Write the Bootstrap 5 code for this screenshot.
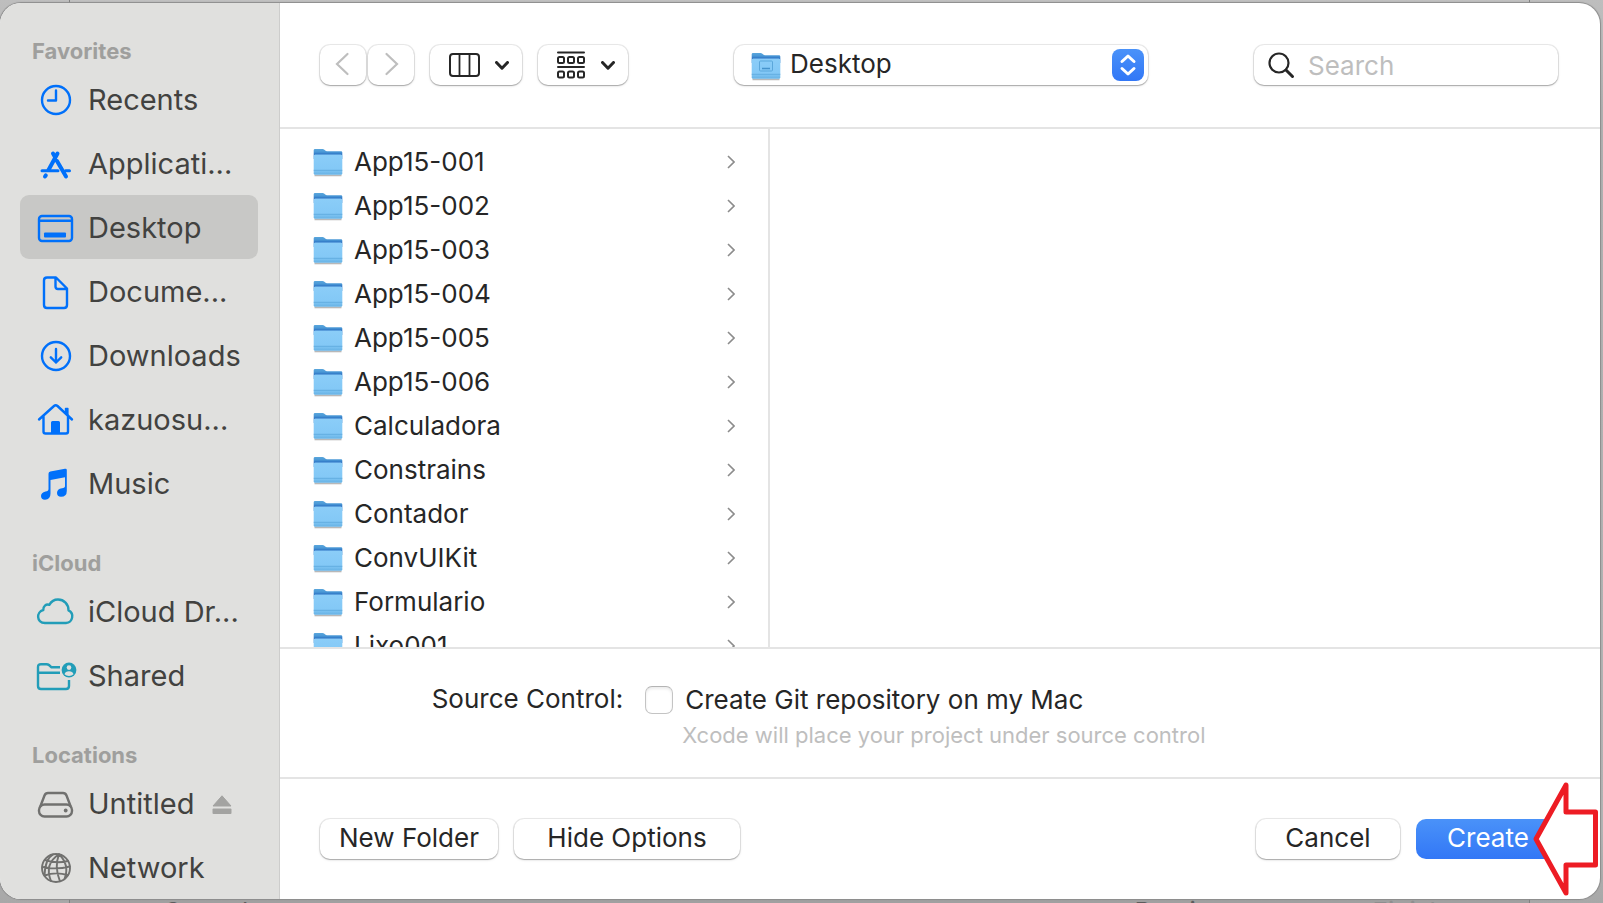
<!DOCTYPE html>
<html lang="en">
<head>
<meta charset="utf-8">
<meta name="viewport" content="width=device-width, initial-scale=1">
<title>Save project</title>
<link rel="stylesheet" href="https://cdn.jsdelivr.net/npm/bootstrap@5.3.0/dist/css/bootstrap.min.css">
<style>
  :root { --ink: #262626; --rule: #e4e4e4; --faint: #bebebe; --blue: #0070fa; --teal: #229db8; }
  body {
    font-family: "Inter", "Liberation Sans", sans-serif;
    font-size: 26px; line-height: 32px; color: var(--ink);
    background: linear-gradient(#bebebe, #b0b0b0 12%, #b4b4b4 92%, #a8a8a8);
    padding: 3px 3px 4px 0;
  }
  svg { display: block; flex: none; overflow: visible; }

  /* the parent window, dimmed behind the sheet */
  .behind {
    inset: 0 73px 0 69px; z-index: -1;
    border: solid #808080; border-width: 0 1px;
    background: linear-gradient(#c0c0c0, #a0a0a0);
    padding: 0 84px 0 93px; gap: 132px; color: #5c5c5c;
  }
  .behind span { margin-bottom: -25px; }
  .behind .dim { color: #8e8e8e; }

  .sheet { border-radius: 21px; background: #fff; box-shadow: 0 0 1px 1px #8c8c8c; }

  /* sidebar */
  .side { width: 280px; background: #e0e0de; border-right: 1px solid #cdcdcc; padding: 0 21px 0 20px; }
  .side h2 { height: 64px; margin: 0; padding: 32px 0 0 12px; font-size: 22px; line-height: 32px; font-weight: 700; color: #9f9f9d; }
  .side .nav-link { height: 64px; padding: 0 0 0 16px; gap: 12px; border-radius: 9px; font-size: 29px; line-height: 40px; color: #424240; white-space: nowrap; }
  .side .nav-link span { padding-top: 2px; }
  .side .nav-link.active { background: #c8c8c6; }
  .side .nav-link > svg:first-child { color: var(--blue); }
  .side .teal .nav-link > svg:first-child { color: var(--teal); }
  .side .grey .nav-link > svg:first-child { color: #71716f; }
  .side .nav-link > .eject { color: #a3a3a1; margin-left: 6px; }
  .line { fill: none; stroke: currentColor; stroke-width: 2; stroke-linecap: round; stroke-linejoin: round; }
  .side .line { stroke-width: 2.4; }

  /* controls */
  .ctl {
    height: 40px; padding: 0; border: 0; border-radius: 10px; background: #fff; color: var(--ink);
    font-size: 26px; line-height: 36px;
    box-shadow: 0 0 0 1px rgba(0,0,0,.08), 0 1px 1px rgba(0,0,0,.2), 0 1px 3px rgba(0,0,0,.12);
  }
  .ctl:hover { background: #fafafa; color: var(--ink); }
  .btn.ctl { padding-bottom: 2px; }
  .tools { height: 126px; padding: 0 42px 0 40px; border-bottom: 2px solid var(--rule); }
  .nav-b { width: 46px; color: var(--faint); }
  .btn.view-b { width: 92px; padding: 0 13px 0 19px; }
  .btn.group-b { width: 90px; }
  .place { width: 414px; }
  .place select { padding: 0 50px 2px 56px; appearance: none; width: 100%; line-height: 38px; }
  .place .pic { left: 17px; top: 6px; pointer-events: none; }
  .place .knob { right: 4px; top: 4px; width: 32px; height: 32px; border-radius: 8px; background: linear-gradient(#4a92f9, #3277f6); pointer-events: none; }
  .find { width: 304px; }
  .find input { width: 100%; padding: 0 12px 0 54px; }
  .find input::placeholder { color: var(--faint); opacity: 1; }
  .find svg { left: 14px; top: 7px; pointer-events: none; }

  /* browser columns */
  .files { width: 490px; padding-top: 11px; border-right: 2px solid var(--rule); }
  .files .list-group-item { height: 44px; padding: 0 33px; gap: 11px; border: 0; color: var(--ink); background: none; }
  .files .list-group-item svg:last-child { color: #8c8c8c; }

  .options { padding: 35px 0 26px; border-top: 2px solid var(--rule); border-bottom: 2px solid var(--rule); }
  .opt-label { flex: 0 0 26%; text-align: right; line-height: 30px; }
  .opt-body { margin-left: 22px; }
  .tick { width: 28px; height: 28px; margin: 0; border: 1px solid #c4c4c4; border-top-color: #b4b4b4; box-shadow: inset 0 2px 3px rgba(0,0,0,.08); flex: none; }
  .tick.form-check-input[type=checkbox] { border-radius: 7px; }
  .note { padding-left: 37px; font-size: 22px; line-height: 32px; color: var(--faint); margin-top: 3px; }

  .foot { padding: 40px 40px 40px 40px; gap: 16px; }
  .go { background: linear-gradient(#4a92f9, #3277f6); color: #fff; box-shadow: none; }
  .go:hover { background: #3277f6; color: #fff; }
  .w-new { width: 178px; } .w-hide { width: 226px; } .w-act { width: 144px; }
  .pointer { right: 2px; bottom: 2px; pointer-events: none; }
</style>
</head>
<body class="vh-100 d-flex overflow-hidden position-relative">

<svg width="0" height="0" class="position-absolute" aria-hidden="true">
  <defs>
    <linearGradient id="fBack" x1="0" y1="0" x2="0" y2="1"><stop offset="0" stop-color="#5aa6dc"/><stop offset=".3" stop-color="#4a98d6"/><stop offset=".55" stop-color="#2a70c2"/><stop offset="1" stop-color="#3b8bd0"/></linearGradient>
    <linearGradient id="fFront" x1="0" y1="0" x2="0" y2="1"><stop offset="0" stop-color="#8bcdf8"/><stop offset=".75" stop-color="#83c8f6"/><stop offset="1" stop-color="#65b1e4"/></linearGradient>
    <symbol id="folder" viewBox="0 0 30 30">
      <path d="M1.500 28.500h27" stroke="#000" stroke-opacity=".28" stroke-width="1.600"/>
      <path d="M.7 3.200Q.7 2 2 2H9.500Q10.600 2 11.400 2.800L12.200 3.600Q13 4.300 14 4.300H28Q29.300 4.300 29.300 5.600V12H.7Z" fill="url(#fBack)"/>
      <path d="M.7 9Q.7 7.400 2.200 7.400H27.800Q29.300 7.400 29.300 9V26.200Q29.300 27.800 27.800 27.800H2.200Q.7 27.800 .7 26.200Z" fill="url(#fFront)"/>
      <path d="M.7 23.300H29.300" stroke="#5ba7db" stroke-width=".8"/>
    </symbol>
    <symbol id="chev" viewBox="0 0 8 14"><path d="M1 1 7 7 1 13" fill="none" stroke="currentColor" stroke-width="1.600"/></symbol>
    <symbol id="down" viewBox="0 0 14 9"><path d="M1.500 1.500 7 7.200 12.500 1.500" fill="none" stroke="currentColor" stroke-width="3" stroke-linecap="round" stroke-linejoin="round"/></symbol>
  </defs>
</svg>

<div class="behind position-absolute d-flex align-items-end overflow-hidden" aria-hidden="true">
  <span>Cancel</span>
  <span class="ms-auto">Previous</span>
  <span class="dim">Finish</span>
</div>

<main class="sheet d-flex flex-fill overflow-hidden position-relative">
  <nav class="side flex-shrink-0 overflow-hidden" aria-label="Places">
    <h2>Favorites</h2>
    <div class="nav flex-column flex-nowrap">
      <a class="nav-link d-flex align-items-center" href="#"><svg width="40" height="40"><g class="line"><circle cx="20" cy="21" r="14"/><path d="M20 11.500V21.500H12"/></g></svg><span>Recents</span></a>
      <a class="nav-link d-flex align-items-center" href="#"><svg width="40" height="40"><g class="line" style="stroke-width:4"><path d="M21.500 10.500 12.500 27M17 10.500 19 14M21 18 30 33.500M9.800 32.300 9 33.500"/><path d="M6 27.700H22M29.500 27.700H33.500" style="stroke-width:3"/></g></svg><span>Applicati...</span></a>
      <a class="nav-link active d-flex align-items-center" href="#" aria-current="page"><svg width="40" height="40"><rect class="line" x="3" y="9" width="33" height="25" rx="3"/><path class="line" d="M3.500 13.800H35.500"/><rect x="8" y="25.500" width="22" height="5" rx="1" fill="currentColor"/></svg><span>Desktop</span></a>
      <a class="nav-link d-flex align-items-center" href="#"><svg width="40" height="40"><path class="line" d="M11 6.500H20L31 17.500V34Q31 37 28 37H11Q8 37 8 34V9.500Q8 6.500 11 6.500ZM19.500 6.500V15.500Q19.500 18 22 18H31"/></svg><span>Docume...</span></a>
      <a class="nav-link d-flex align-items-center" href="#"><svg width="40" height="40"><g class="line"><circle cx="20" cy="21" r="14"/><path d="M20 14V27.500M14.800 22.300 20 27.500 25.200 22.300"/></g></svg><span>Downloads</span></a>
      <a class="nav-link d-flex align-items-center" href="#"><svg width="40" height="40"><path class="line" d="M3 20.500 18 7Q19.700 5.500 21.500 7L36 20.500M7.500 17V32.500Q7.500 34.500 9.500 34.500H30Q32 34.500 32 32.500V17"/><path fill="currentColor" d="M28.800 9.500Q28.800 8.700 29.600 8.700H31.800Q32.600 8.700 32.600 9.500V18L28.800 14.500ZM15 34.500V23.500Q15 22 16.500 22H22.500Q24 22 24 23.500V34.500Z"/></svg><span>kazuosu...</span></a>
      <a class="nav-link d-flex align-items-center" href="#"><svg width="40" height="40"><path fill="currentColor" d="M12.500 10.800Q12.500 9 14.300 8.600L29 5.700Q30.800 5.400 30.800 7V28Q30.800 33.800 25 33.800Q21 33.500 21 30Q21 26 26 25.300Q29 25 29 23V14.200L14.500 17V30.500Q14.500 36.600 9 36.800Q5 36.500 5 33Q5 29.500 9.500 28.500Q12.500 28 12.500 26Z"/></svg><span>Music</span></a>
    </div>
    <h2>iCloud</h2>
    <div class="nav flex-column flex-nowrap teal">
      <a class="nav-link d-flex align-items-center" href="#"><svg width="40" height="40"><path class="line" d="M9 32H30A6.700 6.700 0 0 0 32.500 19.300C32.500 13 28 8.500 22 8.500C17.800 8.500 15 10.800 13.300 13.800C10 12.700 7 15.300 7.300 19C0 21 .3 31.500 9 32Z"/></svg><span>iCloud Dr...</span></a>
      <a class="nav-link d-flex align-items-center" href="#"><svg width="40" height="40"><path class="line" style="stroke-linecap:butt" d="M24 12.300H15.500L13 10Q12 9.200 10.500 9.200H5Q2 9.200 2 12.200V31Q2 34 5 34H30Q33 34 33 31V25M2 17.700H24"/><circle cx="33" cy="15" r="7.400" fill="currentColor"/><circle cx="33" cy="12.600" r="2.300" fill="#e0e0de"/><path d="M28.500 19.200Q29.300 16.200 33 16.200T37.500 19.200Q35.700 20.900 33 20.900T28.500 19.200Z" fill="#e0e0de"/></svg><span>Shared</span></a>
    </div>
    <h2>Locations</h2>
    <div class="nav flex-column flex-nowrap grey">
      <a class="nav-link d-flex align-items-center" href="#"><svg width="40" height="40"><g class="line"><path d="M4.500 23 8.500 12.500Q9.500 10 12 10H27Q29.500 10 30.500 12.500L34.500 23"/><rect x="3" y="21.500" width="33" height="12" rx="5.500"/></g><circle cx="29.700" cy="27.500" r="1.900" fill="currentColor"/></svg><span>Untitled</span><svg class="eject" width="20" height="16"><path d="M10 .8 19 11H1Z" fill="currentColor" stroke="currentColor" stroke-linejoin="round"/><rect x=".5" y="13.500" width="19" height="5.500" rx="1" fill="currentColor"/></svg></a>
      <a class="nav-link d-flex align-items-center" href="#"><svg width="40" height="40"><g class="line" style="stroke-width:1.900"><circle cx="20" cy="21" r="14"/><path d="M23 7.300Q8 17 15 34M23 7.300Q18 20 24 34.300M23 7.300Q34 18 28.500 32M17 7.500Q9 12 8.500 28.500M9 13Q20 17 32 14M6.500 20Q20 23 33.800 19.500M8.500 28.500Q20 24.500 31.500 28"/></g></svg><span>Network</span></a>
    </div>
  </nav>

  <section class="d-flex flex-column flex-fill" style="min-width:0">
    <header class="tools d-flex justify-content-between align-items-center flex-shrink-0">
      <div class="d-flex gap-3">
        <div class="d-flex" style="gap:2px">
          <button class="btn ctl nav-b d-flex align-items-center justify-content-center" type="button" aria-label="Back"><svg width="16" height="22"><path d="M12.500 1 2 11 12.500 21" fill="none" stroke="currentColor" stroke-width="2.200" stroke-linecap="round"/></svg></button>
          <button class="btn ctl nav-b d-flex align-items-center justify-content-center" type="button" aria-label="Forward"><svg width="12" height="22"><path d="M1.500 1 12 11 1.500 21" fill="none" stroke="currentColor" stroke-width="2.200" stroke-linecap="round"/></svg></button>
        </div>
        <button class="btn ctl view-b d-flex align-items-center justify-content-between" type="button" aria-label="Column view"><svg width="31" height="24"><rect class="line" x="1" y="1" width="29" height="22" rx="3"/><path class="line" style="stroke-width:1.800" d="M10.500 1V23M20.500 1V23"/></svg><svg width="14" height="9"><use href="#down"/></svg></button>
        <button class="btn ctl view-b group-b d-flex align-items-center justify-content-between" type="button" aria-label="Group items"><svg width="28" height="28"><g class="line"><path d="M1 1.500H27M1 16H27"/><rect x="1" y="6" width="6" height="6" rx="1.500"/><rect x="11" y="6" width="6" height="6" rx="1.500"/><rect x="21" y="6" width="6" height="6" rx="1.500"/><rect x="1" y="20.500" width="6" height="6" rx="1.500"/><rect x="11" y="20.500" width="6" height="6" rx="1.500"/><rect x="21" y="20.500" width="6" height="6" rx="1.500"/></g></svg><svg width="14" height="9"><use href="#down"/></svg></button>
      </div>
      <div class="place position-relative">
        <select class="ctl d-block" aria-label="Location"><option>Desktop</option></select>
        <svg class="pic position-absolute" width="30" height="30"><use href="#folder"/><rect x="8.500" y="10" width="13" height="10" rx="1" fill="none" stroke="#5ba7db"/><path d="M11 17.500H19" stroke="#4593cc" stroke-width="1.500"/></svg>
        <span class="knob position-absolute d-flex align-items-center justify-content-center"><svg width="16" height="22"><path d="M2 7.500 8 2 14 7.500M2 14.500 8 20 14 14.500" fill="none" stroke="#fff" stroke-width="3" stroke-linecap="round" stroke-linejoin="round"/></svg></span>
      </div>
      <div class="find position-relative">
        <input class="ctl d-block" type="search" placeholder="Search" aria-label="Search">
        <svg class="position-absolute" width="27" height="27"><circle cx="11" cy="11" r="9.500" fill="none" stroke="#262626" stroke-width="2.200"/><path d="M18 18 24.500 24.500" stroke="#262626" stroke-width="3" stroke-linecap="round"/></svg>
      </div>
    </header>

    <div class="d-flex flex-fill overflow-hidden" style="min-height:0">
      <div class="files list-group list-group-flush flex-shrink-0" id="files"></div>
      <div class="flex-fill"></div>
    </div>

    <div class="options d-flex flex-shrink-0">
      <span class="opt-label">Source Control:</span>
      <div class="opt-body">
        <div class="d-flex align-items-center" style="gap:12px">
          <input class="form-check-input tick" type="checkbox" id="git">
          <label for="git">Create Git repository on my Mac</label>
        </div>
        <div class="note">Xcode will place your project under source control</div>
      </div>
    </div>

    <footer class="foot d-flex flex-shrink-0">
      <button class="btn ctl w-new" type="button">New Folder</button>
      <button class="btn ctl w-hide" type="button">Hide Options</button>
      <button class="btn ctl w-act ms-auto" type="button">Cancel</button>
      <button class="btn ctl go w-act" type="button">Create</button>
    </footer>
  </section>

  <svg class="pointer position-absolute" width="66" height="116" aria-hidden="true"><path d="M4 58 34 4V31H63.500V84H34V112Z" fill="#fff" stroke="#ed1c24" stroke-width="5" stroke-linejoin="round"/></svg>
</main>

<script src="https://cdn.jsdelivr.net/npm/bootstrap@5.3.0/dist/js/bootstrap.bundle.min.js"></script>
<script>
  const names = ['App15-001', 'App15-002', 'App15-003', 'App15-004', 'App15-005', 'App15-006',
    'Calculadora', 'Constrains', 'Contador', 'ConvUIKit', 'Formulario', 'Lixo001'];
  document.getElementById('files').innerHTML = names.map(n =>
    `<a href="#" class="list-group-item d-flex align-items-center flex-shrink-0"><svg width="30" height="30"><use href="#folder"/></svg><span class="flex-fill">${n}</span><svg width="8" height="14"><use href="#chev"/></svg></a>`).join('');
</script>
</body>
</html>
